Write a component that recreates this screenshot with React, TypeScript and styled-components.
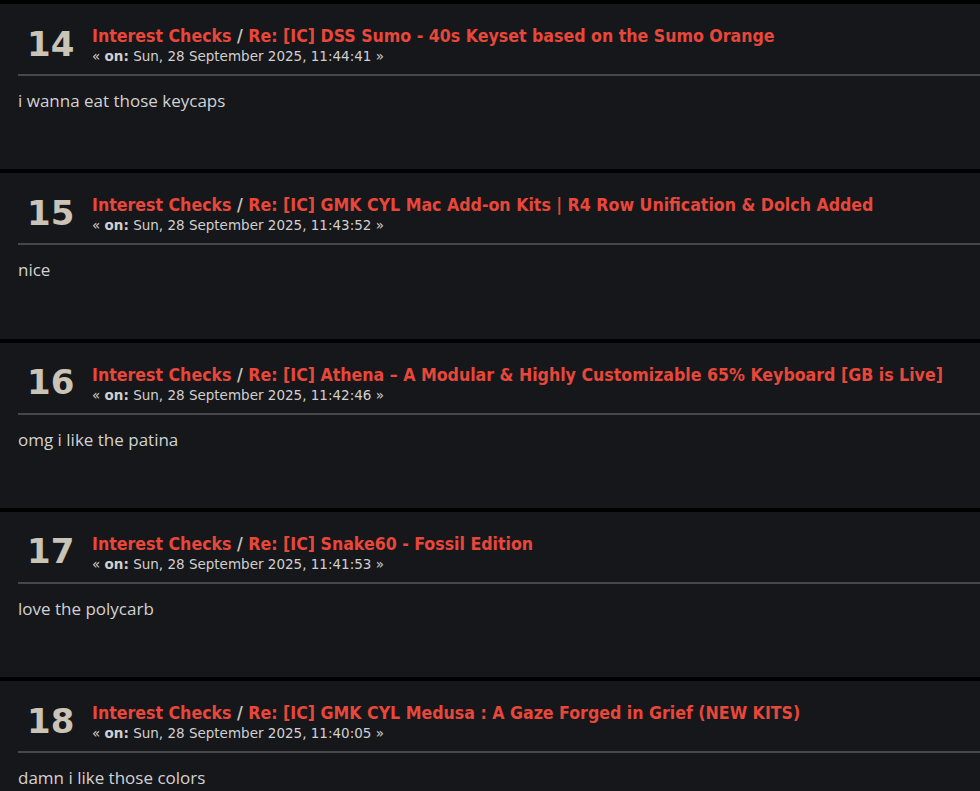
import React from 'react';
import styled, { createGlobalStyle } from 'styled-components';

const GlobalStyle = createGlobalStyle`
  body {
    margin: 0;
    background: #000;
    overflow: hidden;
  }
`;

const PostList = styled.div`
  display: flex;
  flex-direction: column;
  gap: 4px;
  padding-top: 4px;
`;

const PostCard = styled.div`
  background: #16171a;
  height: 165.25px;
  box-sizing: border-box;
  padding-top: 21px;
`;

const PostHeader = styled.div`
  display: flex;
  align-items: center;
  padding-left: 27px;
`;

const Counter = styled.div`
  font-family: 'DejaVu Sans', Verdana, sans-serif;
  font-size: 34px;
  font-weight: 700;
  color: #c9c4b6;
  width: 65px;
  flex-shrink: 0;
  line-height: 40px;
  margin-top: -2px;
`;

const TopicInfo = styled.div`
  display: flex;
  flex-direction: column;
  white-space: nowrap;
`;

const TopicTitle = styled.h5`
  margin: 0;
  font-family: 'DejaVu Sans Condensed', Tahoma, sans-serif;
  font-size: 17.6px;
  font-weight: 700;
  line-height: 23px;
  color: #c9c5b9;

  & a {
    color: #e8473a;
    text-decoration: none;
  }
`;

const PostDate = styled.span`
  font-family: 'DejaVu Sans', Verdana, sans-serif;
  font-size: 13.5px;
  line-height: 16px;
  color: #d0d0d0;
`;

const Divider = styled.hr`
  border: 0;
  height: 2px;
  background: #464748;
  margin: 10px 0 0 18px;
`;

const PostBody = styled.div`
  font-family: 'Open Sans', 'Segoe UI', sans-serif;
  font-size: 17px;
  line-height: 20px;
  color: #d2d2d2;
  padding: 15px 18px 0;
`;

type Post = {
  counter: number;
  subject: string;
  time: string;
  body: string;
};

const posts: Post[] = [
  {
    counter: 14,
    subject: 'Re: [IC] DSS Sumo - 40s Keyset based on the Sumo Orange',
    time: '11:44:41',
    body: 'i wanna eat those keycaps',
  },
  {
    counter: 15,
    subject: 'Re: [IC] GMK CYL Mac Add-on Kits | R4 Row Unification & Dolch Added',
    time: '11:43:52',
    body: 'nice',
  },
  {
    counter: 16,
    subject: 'Re: [IC] Athena \u2013 A Modular & Highly Customizable 65% Keyboard [GB is Live]',
    time: '11:42:46',
    body: 'omg i like the patina',
  },
  {
    counter: 17,
    subject: 'Re: [IC] Snake60 - Fossil Edition',
    time: '11:41:53',
    body: 'love the polycarb',
  },
  {
    counter: 18,
    subject: 'Re: [IC] GMK CYL Medusa : A Gaze Forged in Grief (NEW KITS)',
    time: '11:40:05',
    body: 'damn i like those colors',
  },
];

const App = () => (
  <>
    <GlobalStyle />
    <PostList>
      {posts.map((post) => (
        <PostCard key={post.counter}>
          <PostHeader>
            <Counter>{post.counter}</Counter>
            <TopicInfo>
              <TopicTitle>
                <a href="#">Interest Checks</a> / <a href="#">{post.subject}</a>
              </TopicTitle>
              <PostDate>
                « <strong>on:</strong> Sun, 28 September 2025, {post.time} »
              </PostDate>
            </TopicInfo>
          </PostHeader>
          <Divider />
          <PostBody>{post.body}</PostBody>
        </PostCard>
      ))}
    </PostList>
  </>
);

export default App;
